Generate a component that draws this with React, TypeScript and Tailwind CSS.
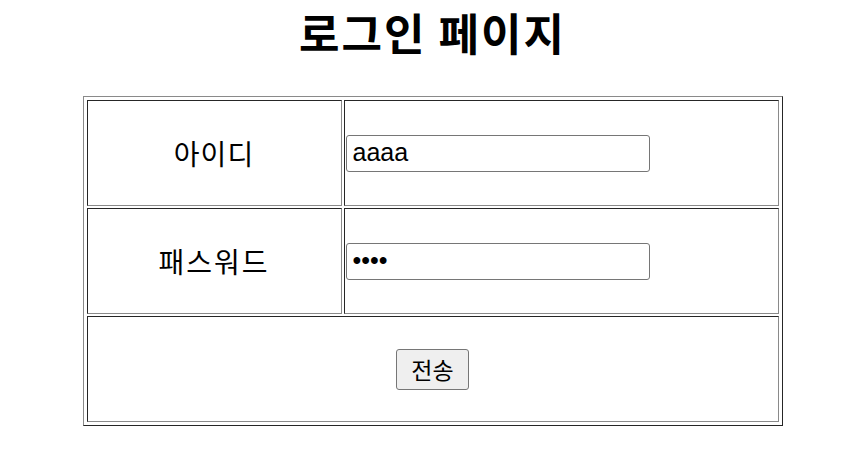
import React from 'react';

const cellBorder = 'border border-t-[#262626] border-l-[#262626] border-b-[#8a8a8a] border-r-[#8a8a8a]';

export default function App() {
  return (
    <div className="min-h-screen bg-white text-black flex flex-col items-center pl-[14px] font-['Noto_Sans_CJK_KR','Noto_Sans',sans-serif]">
      <h1 className="mt-[10px] text-[44px] font-bold leading-none tracking-[2px]">로그인 페이지</h1>

      <form onSubmit={(e) => e.preventDefault()}>
        <table className="mt-[42px] w-[700px] border-separate border-spacing-[2px] p-px border border-t-[#8a8a8a] border-l-[#8a8a8a] border-b-[#262626] border-r-[#262626]">
          <tbody>
            <tr>
              <td className={`${cellBorder} w-[255px] h-[106px] p-px text-center align-middle text-[28px] tracking-[1px]`}>아이디</td>
              <td className={`${cellBorder} h-[106px] p-px align-middle`}>
                <input
                  type="text"
                  defaultValue="aaaa"
                  className="w-[304px] h-[37px] px-[6px] border border-[#767676] rounded-[3px] text-[25px] font-['Liberation_Sans',sans-serif] outline-none"
                />
              </td>
            </tr>
            <tr>
              <td className={`${cellBorder} w-[255px] h-[106px] p-px text-center align-middle text-[28px] tracking-[2px]`}>패스워드</td>
              <td className={`${cellBorder} h-[106px] p-px align-middle`}>
                <input
                  type="password"
                  defaultValue="aaaa"
                  className="w-[304px] h-[37px] px-[6px] border border-[#767676] rounded-[3px] text-[25px] font-['Liberation_Sans',sans-serif] outline-none"
                />
              </td>
            </tr>
            <tr>
              <td colSpan={2} className={`${cellBorder} h-[106px] p-px text-center align-middle`}>
                <button
                  type="submit"
                  className="w-[73px] h-[41px] bg-[#efefef] border border-[#767676] rounded-[3px] text-[23px]"
                >
                  전송
                </button>
              </td>
            </tr>
          </tbody>
        </table>
      </form>
    </div>
  );
}
